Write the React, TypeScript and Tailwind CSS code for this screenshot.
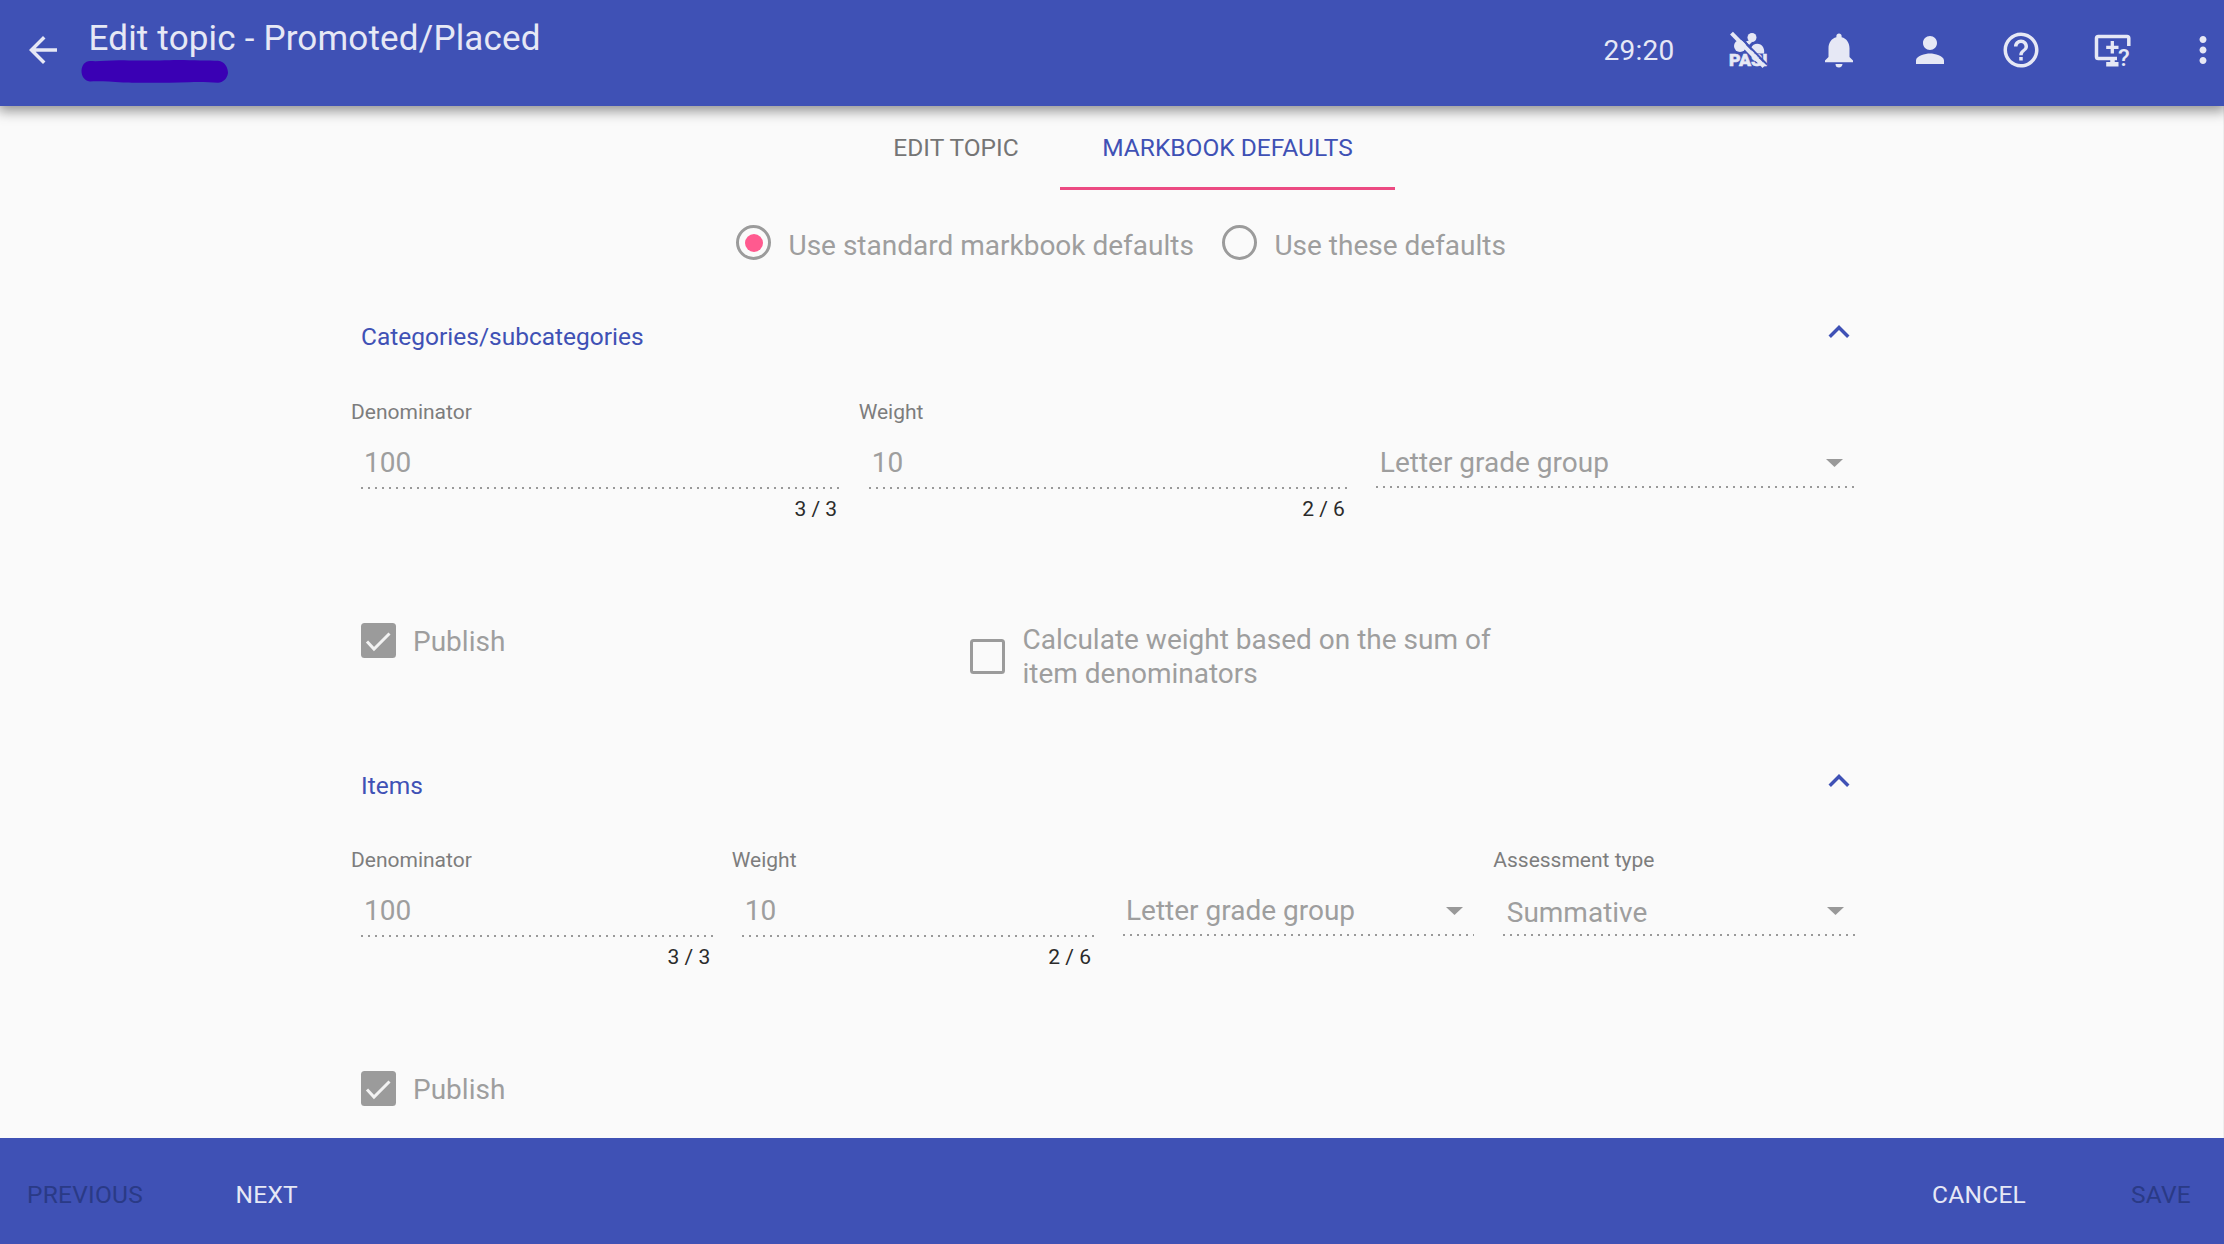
import React from "react";
import {
  MdArrowBack,
  MdHelpOutline,
  MdKeyboardArrowUp,
  MdMoreVert,
  MdNotifications,
  MdPerson,
} from "react-icons/md";

function PasiOffIcon() {
  return (
    <svg className="h-[42px] w-[42px] overflow-visible" viewBox="0 0 42 42" fill="#e6e8f5">
      <circle cx="25" cy="8.500" r="4.500" />
      <circle cx="13" cy="17" r="6" />
      <path d="M19 12.500l4-1.500 2 2-3 3z" />
      <path d="M24 19c2-5 9-6 12-1 1 2 1.500 4 1 6.500H25z" />
      <text x="2" y="37.300" fontFamily="Roboto" fontWeight="900" fontSize="17" textLength="38.500" lengthAdjust="spacingAndGlyphs" stroke="#e6e8f5" strokeWidth="0.500">
        PASI
      </text>
      <path d="M7 2L40 35.500" stroke="#3f51b5" strokeWidth="1.800" />
      <path d="M4.500 4.200L37 37.500" stroke="#e6e8f5" strokeWidth="4" />
    </svg>
  );
}

function ScreenHelpIcon() {
  return (
    <svg className="h-[42px] w-[42px] overflow-visible" viewBox="0 0 42 42" fill="none" stroke="#e6e8f5" strokeWidth="3.500">
      <path d="M26 29.500H7.300a1.800 1.800 0 0 1-1.800-1.800V9.300a1.800 1.800 0 0 1 1.800-1.800h28.700a1.800 1.800 0 0 1 1.800 1.800V17" />
      <path d="M21.300 12v12.500M15.200 18.300H27.500" strokeWidth="3.300" />
      <path d="M15.200 35.200h12.300M21.500 29v6" strokeWidth="4.500" />
      <text x="27" y="37" fontFamily="Roboto" fontWeight="500" fontSize="24" fill="#e6e8f5" stroke="none">
        ?
      </text>
    </svg>
  );
}

function Header() {
  return (
    <header className="relative z-10 flex h-[106px] shrink-0 bg-[#3f51b5] text-[#e6e8f5] shadow-[0_3px_12px_2px_rgba(0,0,0,0.42)]">
      <MdArrowBack className="mt-[29px] ml-[22px] h-[42px] w-[42px] shrink-0" />
      <div className="ml-[17px] flex grow flex-col pt-[18px]">
        <h1 className="ml-[7.500px] text-[35px] leading-[42px] tracking-[0.18px]">Edit topic - Promoted/Placed</h1>
        <svg className="h-[24px] w-[148px]" viewBox="0 0 148 24" fill="#3a00b4">
          <path d="M9 1C18 1.500 26 0.500 38 0.300C55 0.800 80 0.500 97 0C112 0.300 128 0.500 137 0.800C144 1.500 147 8 147 13C146 19 142 22.500 137 22.700C128 22.500 122 21.500 108 22.200C80 23 55 22.700 42 22.400C28 21.500 17 21 9 21.500C3 20.500 0.500 16 0.500 11C0.700 5 4 1.300 9 1Z" />
        </svg>
      </div>
      <div className="box-content flex h-[42px] shrink-0 items-center gap-[49px] pt-[29px]">
        <span className="mt-[2px] mr-[3.500px] text-[28px] leading-[42px] tracking-[0.25px]">29:20</span>
        <PasiOffIcon />
        <MdNotifications className="h-[42px] w-[42px]" />
        <MdPerson className="h-[42px] w-[42px]" />
        <MdHelpOutline className="h-[42px] w-[42px]" />
        <ScreenHelpIcon />
        <MdMoreVert className="h-[42px] w-[42px]" />
      </div>
    </header>
  );
}

function Radio({ label, checked }: { label: string; checked?: boolean }) {
  return (
    <div className="flex">
      <span className="flex h-[35px] w-[35px] items-center justify-center rounded-full border-[3px] border-[#9b9b9b]">
        {checked && <span className="h-[18px] w-[18px] rounded-full bg-[#ff5a8f]" />}
      </span>
      <span className="mt-[4px] ml-[17.500px] text-[28px] leading-[34px] text-[#9e9e9e]">{label}</span>
    </div>
  );
}

function Checkbox({ label, checked, center }: { label: React.ReactNode; checked?: boolean; center?: boolean }) {
  return (
    <div className={center ? "flex items-center" : "flex items-start"}>
      {checked ? (
        <span className="flex h-[35px] w-[35px] shrink-0 items-center justify-center rounded-[3.500px] bg-[#9b9b9b]">
          <svg className="h-[35px] w-[35px]" viewBox="0 0 35 35" fill="none" stroke="#f2f2f2" strokeWidth="3">
            <path d="M6 18.500L13 26L28.500 10.500" />
          </svg>
        </span>
      ) : (
        <span className="-mt-[2px] h-[35px] w-[35px] shrink-0 rounded-[3.500px] border-[3px] border-[#9b9b9b]" />
      )}
      <span className={center ? "ml-[17.500px] text-[28px] leading-[34px] text-[#9e9e9e]" : "mt-[2px] ml-[17px] text-[28px] leading-[34px] text-[#9e9e9e]"}>
        {label}
      </span>
    </div>
  );
}

function DottedLine() {
  return <div className="h-[2px] bg-[linear-gradient(to_right,#999_2px,transparent_2px)] bg-[length:7px_2px]" />;
}

function Label({ children }: { children?: React.ReactNode }) {
  return <div className="-ml-[10px] h-[26px] text-[21px] leading-[26px] text-[#7d7d7d]">{children}</div>;
}

function TextField({ label, value, count }: { label: string; value: string; count: string }) {
  return (
    <div className="flex flex-col">
      <Label>{label}</Label>
      <div className="mt-[21px] h-[41px] pl-[3px] text-[28px] leading-[34px] text-[#9e9e9e]">{value}</div>
      <DottedLine />
      <div className="mt-[7px] pr-[2.500px] text-right text-[21px] leading-[26px] text-[#2b2b2b]">{count}</div>
    </div>
  );
}

function SelectField({ label, value }: { label?: string; value: string }) {
  return (
    <div className="flex flex-col">
      <Label>{label}</Label>
      <div className="mt-[21px] flex h-[40px] justify-between pr-[11.500px] pl-[3.500px] text-[28px] leading-[34px] text-[#9e9e9e]">
        <span className={label ? "mt-[2px]" : ""}>{value}</span>
        <svg className="mt-[13px] h-[8px] w-[17px]" viewBox="0 0 17 8" fill="#999">
          <path d="M0 0H17L8.500 8Z" />
        </svg>
      </div>
      <DottedLine />
    </div>
  );
}

function SectionTitle({ children }: { children: string }) {
  return (
    <div className="flex h-[30px] justify-between text-[24.500px] leading-[30px] text-[#3f51b5]">
      <h2>{children}</h2>
      <MdKeyboardArrowUp className="-mt-[11px] mr-[-5px] h-[42px] w-[42px]" />
    </div>
  );
}

export default function App() {
  return (
    <div className="flex h-[1244px] w-[2224px] flex-col overflow-hidden bg-[#fafafa] font-[Roboto,sans-serif]">
      <Header />
      <main className="h-[1032px] shrink-0 border-r border-[#eeeeee]">
        <nav className="ml-[852px] flex h-[84px] text-[24.500px] leading-[30px]">
          <div className="w-[208px] pt-[27px] text-center text-[#757575]">EDIT TOPIC</div>
          <div className="w-[335px] border-b-[3px] border-[#ec4a82] pt-[27px] text-center text-[#3f51b5]">
            MARKBOOK DEFAULTS
          </div>
        </nav>
        <div className="mt-[35px] ml-[736px] flex h-[37px] gap-[28px]">
          <Radio label="Use standard markbook defaults" checked />
          <Radio label="Use these defaults" />
        </div>
        <div className="ml-[361px] w-[1494px]">
          <section className="h-[449px] pt-[60px]">
            <SectionTitle>Categories/subcategories</SectionTitle>
            <div className="mt-[47px] grid grid-cols-3 gap-[29px]">
              <TextField label="Denominator" value="100" count="3 / 3" />
              <TextField label="Weight" value="10" count="2 / 6" />
              <SelectField value="Letter grade group" />
            </div>
            <div className="mt-[101px] flex">
              <div className="w-[609px]">
                <Checkbox label="Publish" checked />
              </div>
              <div>
                <Checkbox
                  center
                  label={
                    <>
                      Calculate weight based on the sum of
                      <br />
                      item denominators
                    </>
                  }
                />
              </div>
            </div>
          </section>
          <section className="pt-[60px]">
            <SectionTitle>Items</SectionTitle>
            <div className="mt-[46px] grid grid-cols-4 gap-[29px]">
              <TextField label="Denominator" value="100" count="3 / 3" />
              <TextField label="Weight" value="10" count="2 / 6" />
              <SelectField value="Letter grade group" />
              <SelectField label="Assessment type" value="Summative" />
            </div>
            <div className="mt-[101px]">
              <Checkbox label="Publish" checked />
            </div>
          </section>
        </div>
      </main>
      <footer className="flex h-[106px] shrink-0 bg-[#3f51b5] pt-[42px] pr-[33px] pl-[27px] text-[24.500px] leading-[30px] tracking-[0.24px] text-[#e6e8f5]">
        <span className="w-[208.500px] text-[#2a3a86]">PREVIOUS</span>
        <span className="grow">NEXT</span>
        <span className="mr-[105px]">CANCEL</span>
        <span className="text-[#2a3a86]">SAVE</span>
      </footer>
    </div>
  );
}
